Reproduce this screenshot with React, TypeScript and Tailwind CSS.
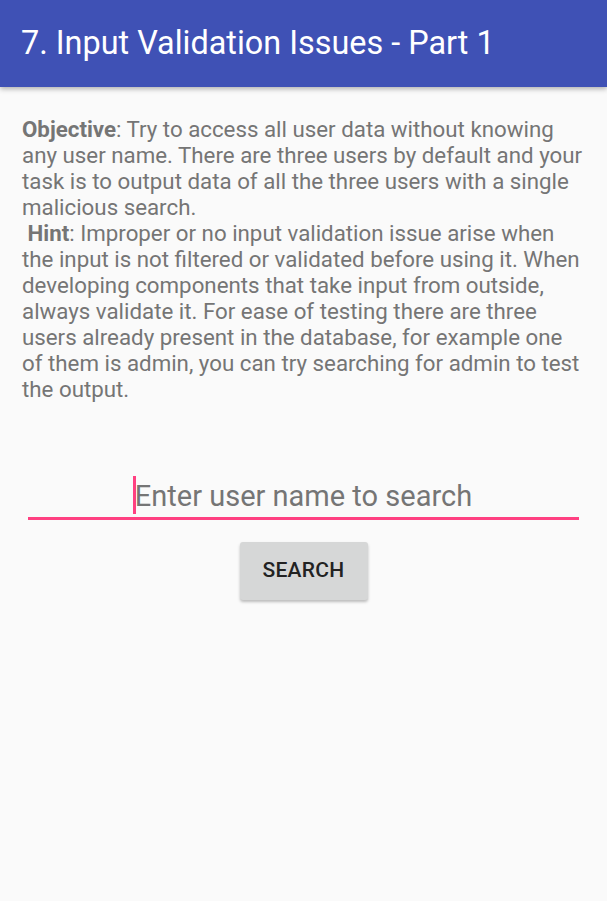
import React from 'react';

export default function App() {
  return (
    <div className="min-h-[901px] w-full bg-[#fafafa]" style={{ fontFamily: 'Roboto, "Noto Sans", sans-serif' }}>
      {/* App bar */}
      <div className="h-[87px] bg-[#3f51b5] flex items-center px-[21px] shadow-[0_2px_5px_rgba(0,0,0,0.3)] relative z-10">
        <h1 className="text-white text-[32.4px] leading-none">7. Input Validation Issues - Part 1</h1>
      </div>

      <div className="px-[22px] pt-[29px]">
        <p className="text-[#757575] text-[22.3px] leading-[26px] max-w-[565px]">
          <span className="font-bold">Objective</span>: Try to access all user data without knowing any user name. There are
          three users by default and your task is to output data of all the three users with a single malicious search.
          <br />
          {'\u00a0'}
          <span className="font-bold">Hint</span>: Improper or no input validation issue arise when the input is not filtered
          or validated before using it. When developing components that take input from outside, always validate it. For
          ease of testing there are three users already present in the database, for example one of them is admin, you can
          try searching for admin to test the output.
        </p>
      </div>

      {/* Search input */}
      <div className="mt-[72px] px-[28px]">
        <div className="relative border-b-[3px] border-[#ff4081] h-[46px] flex items-end justify-center pb-[3px]">
          <span className="absolute left-[105px] bottom-[3px] w-[3px] h-[38px] bg-[#ff4081]" />
          <input
            className="w-full bg-transparent text-center text-[29px] leading-[36px] text-[#757575] placeholder:text-[#757575] outline-none"
            placeholder="Enter user name to search"
          />
        </div>
      </div>

      <div className="flex justify-center mt-[22px]">
        <button className="w-[128px] h-[58px] bg-[#d6d7d7] rounded-[3px] shadow-[0_2px_3px_rgba(0,0,0,0.25)] text-[#222] text-[21px] font-medium tracking-[0.3px]">
          SEARCH
        </button>
      </div>
    </div>
  );
}
